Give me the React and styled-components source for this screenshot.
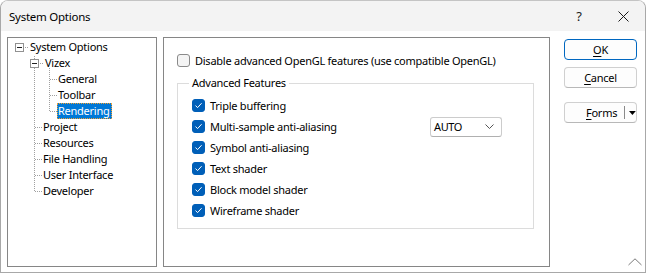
import React from "react";
import styled, { createGlobalStyle } from "styled-components";

const GlobalStyle = createGlobalStyle`
  html, body {
    margin: 0;
    padding: 0;
    background: #ffffff;
  }
  body {
    font-family: "Noto Sans", "Liberation Sans", sans-serif;
    font-size: 11px;
    letter-spacing: -0.25px;
    color: #000;
  }
`;

const Window = styled.div`
  position: relative;
  box-sizing: border-box;
  width: 646px;
  height: 273px;
  border: 1px solid #a8a8a8;
  border-top-color: #c4c4c4;
  border-radius: 8px 8px 0 0;
  background: #ffffff;
  display: flex;
  flex-direction: column;
  overflow: hidden;
`;

const TitleBar = styled.div`
  height: 30px;
  flex: none;
  display: flex;
  align-items: center;
  background: #f3f3f3;
  padding-left: 8px;
`;

const Title = styled.span`
  flex: 1;
  font-size: 11.5px;
`;

const TitleButton = styled.div`
  width: 44px;
  height: 30px;
  display: grid;
  place-items: center;
  font-size: 13px;
  color: #1a1a1a;
`;

const Body = styled.div`
  flex: 1;
  display: flex;
  padding: 6px 8px 5px 6px;
  gap: 6px;
`;

const Panel = styled.div`
  position: relative;
  box-sizing: border-box;
  height: 230px;
  width: ${(p) => p.$width}px;
  border: 1px solid #868686;
  background: #fff;
`;

const TreeList = styled.div`
  position: relative;
  padding-top: 1px;
`;

const TreeLines = styled.svg`
  position: absolute;
  left: 0;
  top: 0;
`;

const TreeRow = styled.div`
  position: relative;
  height: 16px;
  display: flex;
  align-items: center;
  padding-left: ${(p) => p.$indent}px;
`;

const Expander = styled.span`
  box-sizing: border-box;
  width: 9px;
  height: 9px;
  border: 1px solid #919191;
  background: #fff;
  display: grid;
  place-items: center;
  margin-right: 5px;
  &::after {
    content: "";
    width: 5px;
    height: 1px;
    background: #222;
  }
`;

const TreeLabel = styled.span`
  line-height: 16px;
  padding: 0 2px 0 1px;
  ${(p) =>
    p.$selected &&
    `
    background: #0078d7;
    color: #fff;
    outline: 1px dotted #f0a030;
    outline-offset: -1px;
  `}
`;

const Content = styled.div`
  padding: 14px 0 0 13px;
`;

const CheckRow = styled.div`
  height: ${(p) => p.$height || 21}px;
  display: flex;
  align-items: center;
  gap: 5px;
  padding-right: ${(p) => p.$padRight || 0}px;
`;

const Box = styled.span`
  box-sizing: border-box;
  flex: none;
  width: 13px;
  height: 13px;
  border-radius: 3px;
  border: 1px solid ${(p) => (p.$checked ? "#005fb8" : "#8a8a8a")};
  background: ${(p) => (p.$checked ? "#005fb8" : "#f4f4f4")};
  display: grid;
  place-items: center;
`;

const Group = styled.fieldset`
  margin: 7px 0 0 0;
  width: 357px;
  box-sizing: border-box;
  border: 1px solid #dcdcdc;
  padding: 4px 0 7px 14px;
  min-width: 0;
`;

const Legend = styled.legend`
  margin-left: -3px;
  padding: 0 3px;
  line-height: 16px;
`;

const Combo = styled.div`
  margin-left: auto;
  box-sizing: border-box;
  width: 72px;
  height: 20px;
  border: 1px solid #cccccc;
  border-bottom-color: #b0b0b0;
  border-radius: 3px;
  display: flex;
  align-items: center;
  justify-content: space-between;
  padding: 0 7px 0 3px;
  font-size: 11px;
  letter-spacing: -0.4px;
`;

const ButtonColumn = styled.div`
  margin-left: 8px;
  padding-top: 2px;
  display: flex;
  flex-direction: column;
  width: 73px;
`;

const Button = styled.div`
  box-sizing: border-box;
  height: 21px;
  margin-bottom: ${(p) => p.$gap || 7}px;
  border: 1px solid ${(p) => (p.$primary ? "#0067c0" : "#d0d0d0")};
  border-bottom-color: ${(p) => (p.$primary ? "#0067c0" : "#b8b8b8")};
  border-radius: 4px;
  background: #fdfdfd;
  display: flex;
  align-items: center;
  justify-content: center;
`;

const SplitButton = styled(Button)`
  justify-content: flex-start;
  padding-left: 21px;
`;

const Divider = styled.span`
  width: 1px;
  height: 13px;
  background: #8a8a8a;
  margin-left: 7px;
  margin-right: 4px;
`;

const Grip = styled.svg`
  position: absolute;
  right: 3px;
  bottom: 6px;
`;

const Mnemonic = styled.u`
  text-underline-offset: 2px;
`;

function Check({ checked }) {
  return (
    <Box $checked={checked}>
      {checked && (
        <svg width="9" height="9" viewBox="0 0 9 9">
          <path d="M1.5 4.6 L3.6 6.6 L7.6 2.2" fill="none" stroke="#fff" strokeWidth="1" />
        </svg>
      )}
    </Box>
  );
}

const tree = [
  { label: "System Options", indent: 7, expander: true },
  { label: "Vizex", indent: 22, expander: true },
  { label: "General", indent: 49 },
  { label: "Toolbar", indent: 49 },
  { label: "Rendering", indent: 49, selected: true },
  { label: "Project", indent: 34 },
  { label: "Resources", indent: 34 },
  { label: "File Handling", indent: 34 },
  { label: "User Interface", indent: 34 },
  { label: "Developer", indent: 34 },
];

const features = [
  "Triple buffering",
  "Multi-sample anti-aliasing",
  "Symbol anti-aliasing",
  "Text shader",
  "Block model shader",
  "Wireframe shader",
];

export default function App() {
  return (
    <>
      <GlobalStyle />
      <Window>
        <TitleBar>
          <Title>System Options</Title>
          <TitleButton>?</TitleButton>
          <TitleButton>
            <svg width="11" height="11" viewBox="0 0 11 11">
              <path d="M0.5 0.5 L10.5 10.5 M10.5 0.5 L0.5 10.5" stroke="#1a1a1a" strokeWidth="1" />
            </svg>
          </TitleButton>
        </TitleBar>
        <Body>
          <Panel $width={150}>
            <TreeList>
              <TreeLines width="120" height="170">
                <g stroke="#a0a0a0" strokeWidth="1" strokeDasharray="1 1" fill="none">
                  <path d="M15 9.5 H20" />
                  <path d="M26.5 18 V153" />
                  <path d="M30 25.5 H35" />
                  <path d="M41.5 30 V73" />
                  <path d="M42 41.5 H50 M42 57.5 H50 M42 73.5 H50" />
                  <path d="M27 89.5 H35 M27 105.5 H35 M27 121.5 H35 M27 137.5 H35 M27 153.5 H35" />
                </g>
              </TreeLines>
              {tree.map((n) => (
                <TreeRow key={n.label} $indent={n.indent}>
                  {n.expander && <Expander />}
                  <TreeLabel $selected={n.selected}>{n.label}</TreeLabel>
                </TreeRow>
              ))}
            </TreeList>
          </Panel>
          <Panel $width={387}>
            <Content>
              <CheckRow $height={16}>
                <Check checked={false} />
                <span>Disable advanced OpenGL features (use compatible OpenGL)</span>
              </CheckRow>
              <Group>
                <Legend>Advanced Features</Legend>
                {features.map((f, i) => (
                  <CheckRow key={f} $padRight={i === 1 ? 31 : 0}>
                    <Check checked />
                    <span>{f}</span>
                    {i === 1 && (
                      <Combo>
                        <span>AUTO</span>
                        <svg width="9" height="5" viewBox="0 0 9 5">
                          <path d="M0.5 0.5 L4.5 4.5 L8.5 0.5" fill="none" stroke="#555" strokeWidth="1" />
                        </svg>
                      </Combo>
                    )}
                  </CheckRow>
                ))}
              </Group>
            </Content>
          </Panel>
          <ButtonColumn>
            <Button $primary>
              <span>
                <Mnemonic>O</Mnemonic>K
              </span>
            </Button>
            <Button $gap={14}>
              <span>
                <Mnemonic>C</Mnemonic>ancel
              </span>
            </Button>
            <SplitButton>
              <span>
                <Mnemonic>F</Mnemonic>orms
              </span>
              <Divider />
              <svg width="7" height="4" viewBox="0 0 7 4">
                <path d="M0 0 H7 L3.5 4 Z" fill="#000" />
              </svg>
            </SplitButton>
          </ButtonColumn>
        </Body>
        <Grip width="14" height="8" viewBox="0 0 14 8">
          <path d="M0.5 7 L7 0.8 L13.5 7" fill="none" stroke="#7a7a7a" strokeWidth="1" />
        </Grip>
      </Window>
    </>
  );
}
